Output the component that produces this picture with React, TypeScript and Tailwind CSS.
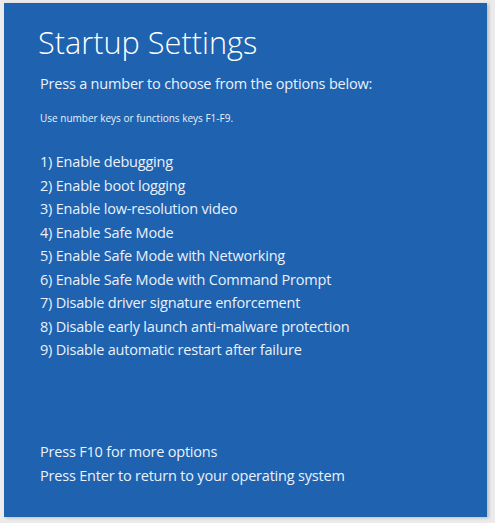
const options = [
  "1) Enable debugging",
  "2) Enable boot logging",
  "3) Enable low-resolution video",
  "4) Enable Safe Mode",
  "5) Enable Safe Mode with Networking",
  "6) Enable Safe Mode with Command Prompt",
  "7) Disable driver signature enforcement",
  "8) Disable early launch anti-malware protection",
  "9) Disable automatic restart after failure",
];

export default function App() {
  return (
    <div className="h-[523px] w-[495px] bg-[#ecebeb] pl-[4px] pt-[3px] font-['Open_Sans',sans-serif]">
      <div className="flex h-[514px] w-[483px] flex-col bg-[#1e62b0] pl-[36px] text-[#eaf1fb] shadow-[2px_1px_3px_rgba(0,0,0,0.2)]">
        <h1 className="-ml-[2px] mt-[20px] text-[30.7px] font-light leading-[38px] text-white">
          Startup Settings
        </h1>
        <p className="mt-[12px] text-[14.5px] leading-[22px] tracking-[-0.2px]">
          Press a number to choose from the options below:
        </p>
        <p className="mt-[16px] text-[10px] leading-[14px]">
          Use number keys or functions keys F1-F9.
        </p>
        <ul className="mt-[25px] flex flex-col text-[14.5px] leading-[23.5px] tracking-[-0.2px]">
          {options.map((o) => (
            <li key={o}>{o}</li>
          ))}
        </ul>
        <div className="mt-auto mb-[30px] flex flex-col text-[14.5px] leading-[23.5px] tracking-[-0.2px]">
          <p>Press F10 for more options</p>
          <p>Press Enter to return to your operating system</p>
        </div>
      </div>
    </div>
  );
}
